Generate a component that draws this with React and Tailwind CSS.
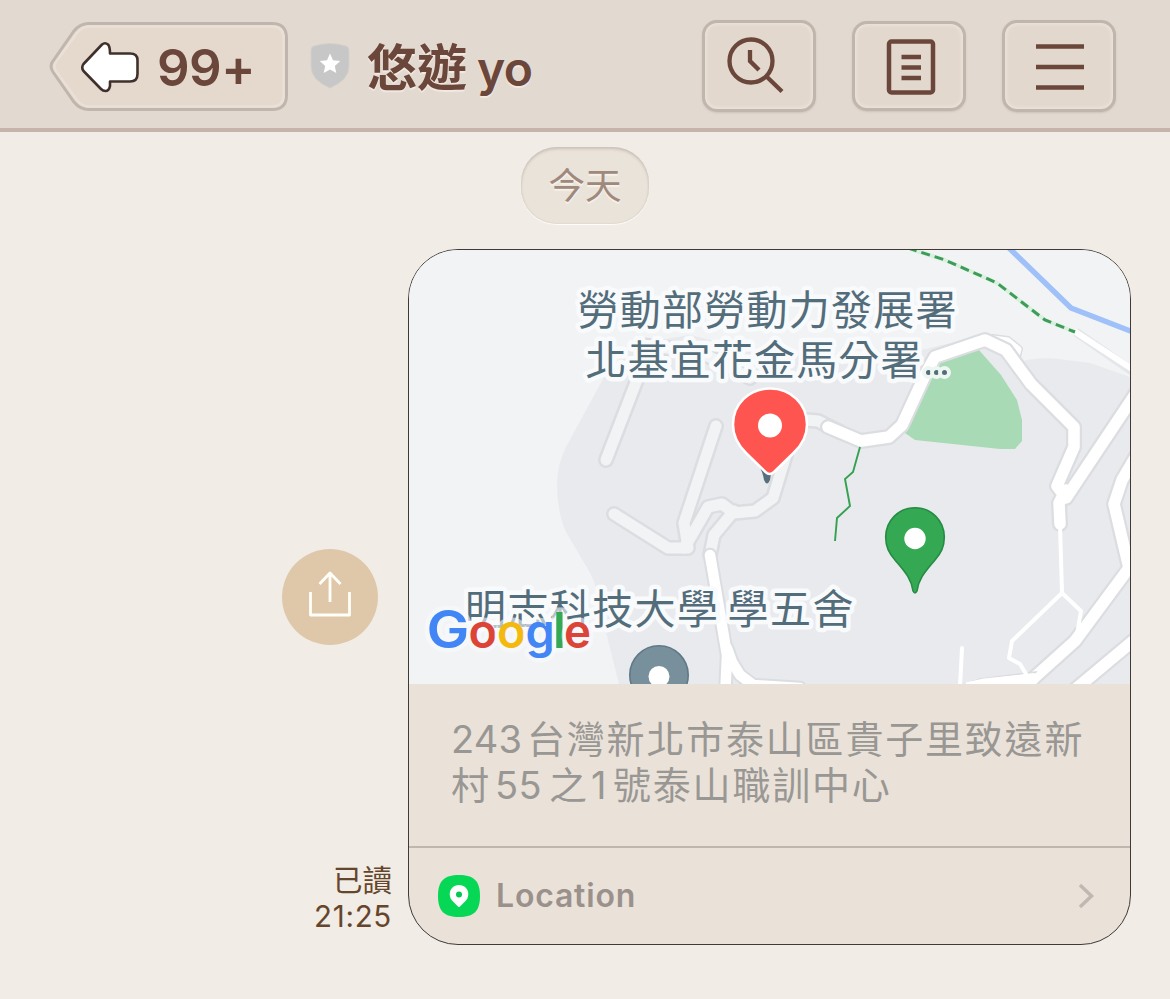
import React from "react";

const minorRoads = [
  "M640 372 L606 460",
  "M716 426 L684 523 L688 548 L668 548 L614 514",
  "M684 548 L692 535 L708 507 L722 504 L734 513 L755 511 L773 498 L786 455",
  "M640 345 L700 352 L750 378",
  "M806 420 L818 421 L840 432",
  "M734 511 L714 535 L710 555",
];

const majorRoads = [
  "M828 427 L861 441 L889 437 L902 425 L926 373 L935 357 L985 340 L1006 350 L1031 384 L1074 427 L1074 447 L1057 486 L1066 498 L1136 393",
  "M1066 490 L1059 503 L1060 524",
  "M1142 446 L1122 480 L1114 504 L1129 568 L1075 641 L1036 676 L1018 694",
  "M1146 630 L1072 692",
];

const lowerRoads = [
  "M710 555 L717 596 L727 655 L725 700",
  "M727 648 L732 662 L740 675 L753 685 L800 688",
];

const labelStyle =
  "fill-[#536d7b] stroke-[#f8fafc] stroke-[9px] [paint-order:stroke] [stroke-linejoin:round] font-['Noto_Sans_CJK_TC',sans-serif] text-[41px]";

function RoadGroup({ roads, casing, width, color }) {
  return (
    <g fill="none" strokeLinecap="round" strokeLinejoin="round">
      {roads.map((d) => (
        <path key={`c${d}`} d={d} stroke="#dbdde1" strokeWidth={casing} />
      ))}
      {roads.map((d) => (
        <path key={d} d={d} stroke={color} strokeWidth={width} />
      ))}
    </g>
  );
}

function MapView() {
  return (
    <svg viewBox="409 250 721 434" className="block h-[434px] w-full bg-[#f1f3f5]">
      <path
        d="M619 684 L608 640 L597 592 Q594 578 586 566 L565 530 Q557 510 557 485 Q557 465 566 447 L603 379 L630 345 L690 335 L760 352 L900 355 L985 335 L1012 364 Q1035 356 1058 359 L1090 363 L1130 377 V684 Z"
        fill="#e8eaee"
      />
      <RoadGroup roads={minorRoads} casing={16} width={11} color="#f1f3f5" />
      <path d="M905 433 L935 362 L979 350 L1001 375 L1017 400 L1022 420 L1022 441 L1015 449 L1000 449 L915 440 Z" fill="#a8dab5" />
      <RoadGroup roads={["M993 338 L1008 340 L1019 349 L1016 361"]} casing={8} width={5} color="#fff" />
      <RoadGroup roads={majorRoads} casing={16} width={11.5} color="#fff" />
      <RoadGroup roads={lowerRoads} casing={14.5} width={10.5} color="#fff" />
      <path d="M960 686 L980 679 L1036 672 L1022 692 Z" fill="#fff" stroke="#dadce1" strokeWidth="1.5" />
      <path d="M966 684 L984 680 L1034 675 L1030 686 Z" fill="#fff" stroke="#fff" strokeWidth="3" />
      <g fill="none" stroke="#fff" strokeWidth="4" strokeLinejoin="round" strokeLinecap="round">
        <path d="M1060 525 L1062 593 L1012 641 L1009 658 L1020 664 L1026 674" />
        <path d="M1062 593 L1081 611 L1076 640" />
        <path d="M962 648 L960 686" />
      </g>
      <path d="M1076 332 L1132 371" fill="none" stroke="#e4e6ea" strokeWidth="9" />
      <path d="M1074 331 L1132 369" fill="none" stroke="#fff" strokeWidth="6" />
      <path d="M1008 247 L1071 308 L1133 332" fill="none" stroke="#9fc0f8" strokeWidth="5.5" />
      <path d="M910 249 L945 260 L997 283 L1045 320 L1075 332" fill="none" stroke="#daf0de" strokeWidth="4" />
      <path d="M908 248 L945 260 L997 283 L1045 320 L1075 332" fill="none" stroke="#3c9d58" strokeWidth="3" strokeDasharray="9 5" />
      <path d="M860 447 L853 472 L845 479 L850 506 L837 518 L835 541" fill="none" stroke="#34a151" strokeWidth="1.9" />

      <path d="M759 465 Q763 473 764 480 Q767 487 770 480 Q771 470 775 466 Z" fill="#566f7c" />
      <path
        d="M770 388.500 C749 388.500 733 404 733 424.500 C733 436 738 445 746 453 L765.500 472 Q769.500 476 774 472 L793.500 453 C802 445 807 436 807 424.500 C807 404 791 388.500 770 388.500 Z"
        fill="#ff5551"
        stroke="#fff"
        strokeWidth="2.500"
      />
      <circle cx="770" cy="425.500" r="12" fill="#fff" />

      <path
        d="M915 507.700 C898.500 507.700 885.700 521 885.700 537 C885.700 547 889 553 895 560 C905 572 911 578 913 591 Q915 595 917 591 C919 578 925 572 935 560 C941 553 944.300 547 944.300 537 C944.300 521 931.500 507.700 915 507.700 Z"
        fill="#34a853"
        stroke="#258c43"
        strokeWidth="1.600"
      />
      <circle cx="915" cy="538.500" r="10.700" fill="#fff" />
      <circle cx="659" cy="675" r="29.200" fill="#78909c" stroke="#5f7986" strokeWidth="1.600" />
      <circle cx="659" cy="676.500" r="10.500" fill="#fff" />

      <text x="577.500" y="325" textLength="379" className={labelStyle}>勞動部勞動力發展署</text>
      <text x="585.500" y="375" textLength="336" className={labelStyle}>北基宜花金馬分署</text>
      <g fill="#536d7b" stroke="#edf6f0" strokeWidth="8" className="[paint-order:stroke]">
        <circle cx="928.500" cy="372.500" r="2.500" />
        <circle cx="936.500" cy="372.500" r="2.500" />
        <circle cx="944.500" cy="372.500" r="2.500" />
      </g>
      <text x="465" y="623.500" textLength="253" className={labelStyle}>明志科技大學</text>
      <text x="727.500" y="623.500" textLength="126" className={labelStyle}>學五舍</text>

      <g
        strokeWidth="9"
        stroke="#f8fafc"
        strokeOpacity=".6"
        strokeLinejoin="round"
        className="font-['Inter',sans-serif] font-semibold [paint-order:stroke]"
      >
        <text x="426.500" y="648" fontSize="51.500" fill="#4285f4" textLength="43" lengthAdjust="spacingAndGlyphs">G</text>
        <text x="468.500" y="648" fontSize="47" fill="#db4437">o</text>
        <text x="497" y="648" fontSize="47" fill="#f4b90f">o</text>
        <text x="525.500" y="648" fontSize="47" fill="#4285f4">g</text>
        <text x="553" y="648" fontSize="49" fill="#34a853">l</text>
        <text x="564" y="648" fontSize="47" fill="#db4437" textLength="27" lengthAdjust="spacingAndGlyphs">e</text>
      </g>
    </svg>
  );
}

function HeaderButton({ label, className, children }) {
  return (
    <button
      aria-label={label}
      className={`flex w-[114px] items-center justify-center rounded-[15px] border-[3px] border-[#c1b6ad] bg-[#e3d8ce] shadow-[inset_0_0_3px_2px_#eae1d8,0_1px_2px_#cfc4bb] ${className}`}
    >
      {children}
    </button>
  );
}

function Header() {
  return (
    <header className="flex h-[132px] items-start border-b-4 border-[#c6b3aa] bg-[#e2d9d0] pl-[49px] pr-[54px] text-[#6b463b]">
      <button className="relative mt-[21px] flex h-[91px] w-[240px] items-center">
        <svg viewBox="0 0 240 91" className="absolute inset-0 h-full w-full">
          <path
            d="M40 2.500 H223 Q237.500 2.500 237.500 17 V74 Q237.500 88.500 223 88.500 H40 Q31 88.500 25 81 L4 51 Q0 45 4 40 L25 10 Q31 2.500 40 2.500 Z"
            fill="#e5d9ce"
            stroke="#c1b6ad"
            strokeWidth="3"
          />
          <path
            d="M40 5.500 H223 Q234.500 5.500 234.500 17 V74 Q234.500 85.500 223 85.500 H40 Q33 85.500 28 79 L7 50 Q4 45 7 41 L28 12 Q33 5.500 40 5.500 Z"
            fill="none"
            stroke="#eae0d7"
            strokeWidth="2.500"
          />
        </svg>
        <svg viewBox="0 0 60 52" className="relative ml-[31px] h-[52px] w-[60px]">
          <path
            d="M22 3.500 Q25 1 28 3.500 Q30 5.500 30 12.500 H50 Q57.500 12.500 57.500 19 V33 Q57.500 40.500 50 40.500 H30 V45 Q29 50 25.500 50 Q23 50 21 48 L3.500 30 Q1 26.500 3.500 23 Z"
            fill="#fff"
            stroke="#40302c"
            strokeWidth="2.600"
            strokeLinejoin="round"
          />
        </svg>
        <span className="relative ml-[17px] mt-[2px] font-['Inter',sans-serif] text-[51px] font-semibold leading-none tracking-[-0.5px]">99+</span>
      </button>

      <svg viewBox="0 0 40 46" className="ml-[21px] mt-[43px] h-[46px] w-[40px]">
        <path d="M4 3 Q20 -2 36 3 Q39 4 39 7 V23 Q39 37 20 45 Q1 37 1 23 V7 Q1 4 4 3 Z" fill="#c7c7c7" stroke="#d5d0cb" strokeWidth="1" />
        <path d="m20 10.500 3 6.700 7.200.8-5.400 4.900 1.500 7.200-6.300-3.700-6.300 3.700 1.500-7.200-5.400-4.900 7.200-.8z" fill="#fff" />
      </svg>

      <h1 className="ml-[17px] mt-[28px] flex h-[72px] items-baseline whitespace-nowrap leading-[72px] [text-shadow:0_2px_1px_#f3e9e2]">
        <span className="font-['Noto_Sans_CJK_TC',sans-serif] text-[50px] font-bold">悠遊</span>
        <span className="ml-[10px] font-['Inter',sans-serif] text-[48px] font-semibold tracking-[-0.5px]">yo</span>
      </h1>

      <div className="ml-auto flex gap-[36px] pt-[20px]">
        <HeaderButton label="Search" className="h-[92px]">
          <svg viewBox="0 0 58 58" className="mb-[3px] mr-[9px] h-[58px] w-[58px]" fill="none" stroke="#6b463b" strokeWidth="4.300">
            <circle cx="25" cy="25" r="21.500" />
            <path d="M24 14 V25 L33 34 M40 40 L56 55.500" />
          </svg>
        </HeaderButton>
        <HeaderButton label="Notes" className="mt-px h-[90px]">
          <svg viewBox="0 0 50 56" className="ml-[4px] mt-[2px] h-[56px] w-[50px]" fill="none" stroke="#6b463b" strokeWidth="4.500">
            <rect x="3" y="2.500" width="44" height="51" rx="2.500" />
            <path d="M15.500 18 H35 M15.500 28.500 H35 M15.500 39 H35" />
          </svg>
        </HeaderButton>
        <HeaderButton label="Menu" className="h-[92px]">
          <svg viewBox="0 0 48 48" className="ml-[2px] mt-[2px] h-[48px] w-[48px]" fill="none" stroke="#6b463b" strokeWidth="4.600">
            <path d="M0 3.500 H48 M0 24 H48 M0 44.500 H48" />
          </svg>
        </HeaderButton>
      </div>
    </header>
  );
}

function LocationCard() {
  return (
    <article className="flex h-[696px] w-[723px] flex-col overflow-hidden rounded-[50px] border border-[#3f3a38] bg-[#eae2d9]">
      <MapView />
      <p className="h-[162px] whitespace-nowrap pl-[42px] pt-[32px] font-['Inter','Noto_Sans_CJK_TC',sans-serif] text-[38px] leading-[46px] tracking-[1.800px] text-[#999794]">
        <span className="flex">
          <span className="w-[76px] tracking-[0.200px]">243</span>
          <span>台灣新北市泰山區貴子里致遠新</span>
        </span>
        <span className="flex">
          <span className="w-[44px]">村</span>
          <span className="w-[54px] tracking-[0.500px]">55</span>
          <span className="w-[42px]">之</span>
          <span className="w-[22px]">1</span>
          <span>號泰山職訓中心</span>
        </span>
      </p>
      <div className="flex flex-1 items-center border-t-2 border-[#bfb6af] pl-[29px] pr-[35px]">
        <svg viewBox="0 0 42 42" className="h-[42px] w-[42px]">
          <path d="M21 0 C36 0 42 6 42 21 S36 42 21 42 0 36 0 21 6 0 21 0 Z" fill="#06d755" />
          <path d="M21 10 C15.500 10 11.700 14 11.700 19 C11.700 22 13 24.500 15 26.500 L20 31.500 Q21 32.500 22 31.500 L27 26.500 C29 24.500 30.300 22 30.300 19 C30.300 14 26.500 10 21 10 Z" fill="#fff" />
          <circle cx="21" cy="19.500" r="3" fill="#06c755" />
        </svg>
        <span className="ml-[16px] font-['Inter',sans-serif] text-[32px] font-semibold leading-none tracking-[0.800px] text-[#9b918c]">Location</span>
        <svg viewBox="0 0 18 26" className="ml-auto h-[26px] w-[18px]" fill="none" stroke="#c0b8b2" strokeWidth="3.500">
          <path d="M3 2 L14.500 13 L3 24" />
        </svg>
      </div>
    </article>
  );
}

export default function App() {
  return (
    <div className="flex h-[999px] w-[1170px] flex-col overflow-hidden bg-[#f1ece6]">
      <Header />
      <main className="flex flex-col items-center pt-[15px]">
        <div className="flex h-[77px] w-[128px] items-center justify-center rounded-[36px] bg-[#eae3da] font-['Noto_Sans_CJK_TC',sans-serif] text-[36.500px] leading-none text-[#9f897c] shadow-[inset_0_2px_3px_#c9c1b9,inset_0_0_2px_#d3cbc3,0_1px_1px_#fffdfa] [text-shadow:0_2px_1px_#f7f1eb]">
          <span className="mb-[2px]">今天</span>
        </div>
        <div className="mt-[25px] flex self-end pr-[39px]">
          <div className="mr-[16px] grid w-[110px]">
            <button aria-label="Share" className="col-start-1 row-start-1 flex h-24 w-24 items-center justify-center self-center rounded-full bg-[#dfc8aa]">
              <svg viewBox="0 0 42 46" className="mb-[7px] h-[46px] w-[42px]" fill="none" stroke="#fffef9" strokeWidth="2.800" strokeLinejoin="round">
                <path d="M1.500 21 V44 H40.500 V21 M21 31 V2 M10.500 13 L21 2 L31.500 13" />
              </svg>
            </button>
            <div className="col-start-1 row-start-1 self-end justify-self-end pb-[11px] text-right font-['Inter','Noto_Sans_CJK_TC',sans-serif] text-[29.500px] leading-[36px] text-[#65452c]">
              <div>已讀</div>
              <div className="tracking-[0.700px]">21:25</div>
            </div>
          </div>
          <LocationCard />
        </div>
      </main>
    </div>
  );
}
